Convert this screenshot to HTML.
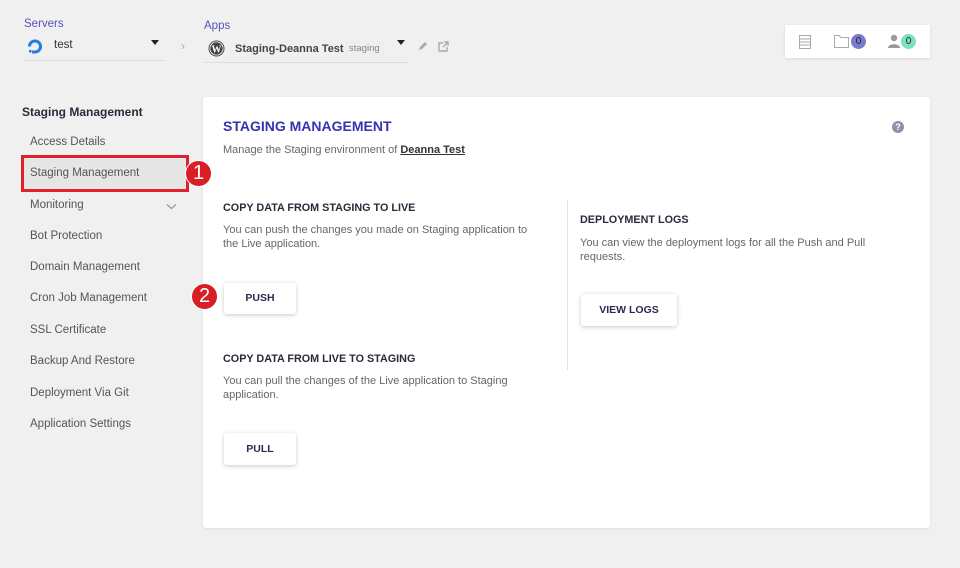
<!DOCTYPE html>
<html><head><meta charset="utf-8"><style>
*{box-sizing:border-box;margin:0;padding:0}
body{width:960px;height:568px;background:#f0f0f1;font-family:"Liberation Sans",sans-serif;position:relative;overflow:hidden;color:#333}
.a{position:absolute}
.lbl{color:#5552b8;font-size:11.5px}
.side{font-size:11.5px;color:#555}
.card{left:203px;top:97px;width:727px;height:431px;background:#fff;border-radius:3px;box-shadow:0 1px 3px rgba(0,0,0,.08)}
.h{font-size:10.8px;font-weight:bold;color:#2a2a3a}
.p{font-size:11px;color:#666;line-height:14px}
.btn{background:#fff;border-radius:3px;box-shadow:0 1px 4px rgba(0,0,0,.22);font-size:10.5px;font-weight:bold;color:#2a2a55;text-align:center}
.badge{z-index:5;width:27px;height:27px;border-radius:50%;background:#d81f26;color:#fff;font-size:20px;text-align:center;line-height:25px;border:1.5px solid #fff}
</style></head><body>
<div class="a lbl" style="left:24px;top:18px">Servers</div>
<svg class="a" style="left:26px;top:37px" width="18" height="18" viewBox="0 0 18 18"><path d="M9 16.5A7 7 0 1 0 2 9.5h3a4 4 0 1 1 4 4z" fill="#1f7fe0"/><rect x="6" y="13.5" width="3" height="3" fill="#1f7fe0"/><rect x="3" y="13" width="2.5" height="2.5" fill="#1f7fe0"/></svg>
<div class="a" style="left:54px;top:39px;font-size:11.5px;color:#333">test</div>
<div class="a" style="left:151px;top:40px;border:4px solid transparent;border-top:5px solid #222"></div>
<div class="a" style="left:24px;top:60px;width:140px;height:1px;background:#ddd"></div>
<div class="a" style="left:181px;top:39px;color:#aaa;font-size:12px">›</div>
<div class="a lbl" style="left:204px;top:20px">Apps</div>
<svg class="a" style="left:208px;top:40px" width="17" height="17" viewBox="0 0 17 17"><circle cx="8.5" cy="8.5" r="8" fill="#444"/><circle cx="8.5" cy="8.5" r="6.6" fill="none" stroke="#fff" stroke-width=".8"/><text x="8.5" y="12.3" font-size="10" font-weight="bold" fill="#fff" text-anchor="middle" font-family="Liberation Serif">W</text></svg>
<div class="a" style="left:235px;top:43px;font-size:11px;font-weight:bold;color:#444">Staging-Deanna Test</div>
<div class="a" style="left:345px;top:41px;background:#eee;color:#888;font-size:9.5px;padding:2px 4px;border-radius:2px">staging</div>
<div class="a" style="left:397px;top:40px;border:4px solid transparent;border-top:5px solid #222"></div>
<div class="a" style="left:204px;top:62px;width:205px;height:1px;background:#ddd"></div>
<svg class="a" style="left:418px;top:41px" width="10" height="10" fill="#aaa"><path d="M1 9l1-3 5-5 2 2-5 5z"/></svg>
<svg class="a" style="left:438px;top:41px" width="11" height="11" viewBox="0 0 11 11" fill="none" stroke="#aaa" stroke-width="1.4"><path d="M5 2H1v8h8V6M6 1h4v4M10 1L5 6"/></svg>
<div class="a" style="left:785px;top:25px;width:145px;height:33px;background:#fff;box-shadow:0 1px 3px rgba(0,0,0,.1)"></div>
<svg class="a" style="left:798px;top:35px" width="14" height="14" fill="none" stroke="#aaa" stroke-width="1"><rect x="1.5" y=".5" width="11" height="13"/><path d="M1.5 4h11M1.5 7h11M1.5 10h11"/></svg>
<svg class="a" style="left:834px;top:35px" width="15" height="13" fill="none" stroke="#aaa" stroke-width="1"><path d="M.5 12.5V.5h5l1 2h8v10z"/></svg>
<div class="a" style="left:851px;top:34px;width:15px;height:15px;border-radius:50%;background:#7a7ad0;color:#222;font-size:10px;text-align:center;line-height:15px">0</div>
<svg class="a" style="left:888px;top:34px" width="12" height="14" fill="#999"><circle cx="6" cy="4" r="3.2"/><path d="M0 14c0-5 12-5 12 0z"/></svg>
<div class="a" style="left:901px;top:34px;width:15px;height:15px;border-radius:50%;background:#7de0c0;color:#222;font-size:10px;text-align:center;line-height:15px">0</div>

<div class="a" style="left:22px;top:105px;font-size:12px;font-weight:bold;color:#2a2a3a">Staging Management</div>
<div class="a side" style="left:30px;top:136px">Access Details</div>
<div class="a" style="left:21px;top:155px;width:168px;height:37px;background:#e6e6e6;border:3px solid #e0202a"></div>
<div class="a side" style="left:30px;top:167px">Staging Management</div>
<div class="a badge" style="left:185px;top:160px">1</div>
<div class="a side" style="left:30px;top:199px">Monitoring</div>
<svg class="a" style="left:166px;top:203px" width="11" height="8" fill="none" stroke="#999" stroke-width="1.3"><path d="M1 1.5l4.5 4 4.5-4"/></svg>
<div class="a side" style="left:30px;top:230px">Bot Protection</div>
<div class="a side" style="left:30px;top:261px">Domain Management</div>
<div class="a side" style="left:30px;top:292px">Cron Job Management</div>
<div class="a side" style="left:30px;top:324px">SSL Certificate</div>
<div class="a side" style="left:30px;top:355px">Backup And Restore</div>
<div class="a side" style="left:30px;top:387px">Deployment Via Git</div>
<div class="a side" style="left:30px;top:418px">Application Settings</div>

<div class="a card"></div>
<div class="a" style="left:223px;top:118px;font-size:14px;font-weight:bold;color:#3533b0">STAGING MANAGEMENT</div>
<div class="a" style="left:892px;top:121px;width:12px;height:12px;border-radius:50%;background:#8a93a8;color:#fff;font-size:9px;font-weight:bold;text-align:center;line-height:12px">?</div>
<div class="a p" style="left:223px;top:143px">Manage the Staging environment of <b style="color:#333;text-decoration:underline">Deanna Test</b></div>
<div class="a h" style="left:223px;top:202px">COPY DATA FROM STAGING TO LIVE</div>
<div class="a p" style="left:223px;top:223px;width:316px">You can push the changes you made on Staging application to the Live application.</div>
<div class="a badge" style="left:191px;top:283px">2</div>
<div class="a btn" style="left:224px;top:283px;width:72px;height:31px;line-height:31px">PUSH</div>
<div class="a h" style="left:223px;top:353px">COPY DATA FROM LIVE TO STAGING</div>
<div class="a p" style="left:223px;top:374px;width:310px">You can pull the changes of the Live application to Staging application.</div>
<div class="a btn" style="left:224px;top:433px;width:72px;height:32px;line-height:32px">PULL</div>
<div class="a" style="left:567px;top:200px;width:1px;height:170px;background:#e3e3e3"></div>
<div class="a h" style="left:580px;top:214px">DEPLOYMENT LOGS</div>
<div class="a p" style="left:580px;top:236px;width:305px">You can view the deployment logs for all the Push and Pull requests.</div>
<div class="a btn" style="left:581px;top:294px;width:96px;height:32px;line-height:32px">VIEW LOGS</div>
</body></html>
